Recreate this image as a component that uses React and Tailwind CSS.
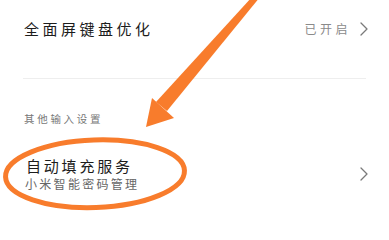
const Chevron = () => (
  <svg width="8" height="14" viewBox="0 0 8 14" fill="none" className="shrink-0">
    <path d="M1 1l6 6-6 6" stroke="#7a7a7a" strokeWidth="1.3" strokeLinecap="round" strokeLinejoin="round" />
  </svg>
)

const Annotation = () => (
  <svg className="absolute inset-0 pointer-events-none" width="389" height="221" viewBox="0 0 389 221">
    <ellipse cx="95" cy="173.75" rx="89.5" ry="33.75" fill="none" stroke="#f87c2c" strokeWidth="5" transform="rotate(-2 95 173.75)" />
    <polygon points="252,-3 260,-3 167,111 156,102" fill="#f87c2c" />
    <polygon points="152,98 174,118 146,127" fill="#f87c2c" />
  </svg>
)

const App = () => {
  return (
    <div
      className="relative w-[389px] h-[221px] overflow-hidden bg-white"
      style={{ fontFamily: '"Noto Sans CJK SC", "Noto Sans", sans-serif' }}
    >
      <div className="flex items-center h-[57px] pl-[24px] pr-[21px]">
        <span className="text-[15px] leading-[20px] tracking-[3.5px] text-[#1c1c1c]">全面屏键盘优化</span>
        <span className="ml-auto text-[12px] leading-[16px] tracking-[3.5px] text-[#8a8a8a]">已开启</span>
        <span className="ml-[9px]">
          <Chevron />
        </span>
      </div>
      <div className="h-[21px]" />
      <div className="mx-[23px] border-t border-[#eeeeee]" />
      <div className="pt-[33px] pl-[24px]">
        <p className="text-[10.5px] leading-[14px] tracking-[2.7px] text-[#777777]">其他输入设置</p>
      </div>
      <div className="flex items-center mt-[30px] pl-[26px] pr-[21px]">
        <div className="flex flex-col">
          <span className="text-[15px] leading-[20px] tracking-[2.8px] text-[#1c1c1c]">自动填充服务</span>
          <span className="-ml-[1px] text-[12px] leading-[16px] tracking-[2.3px] text-[#666666]">小米智能密码管理</span>
        </div>
        <span className="ml-auto">
          <Chevron />
        </span>
      </div>
      <Annotation />
    </div>
  )
}

export default App
